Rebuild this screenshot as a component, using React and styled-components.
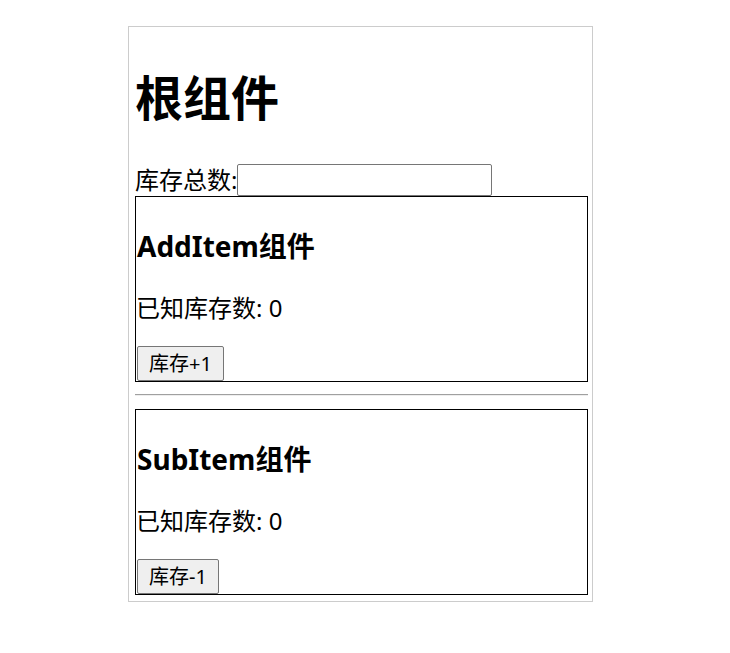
import React, { useState } from 'react';
import styled, { createGlobalStyle } from 'styled-components';

const GlobalStyle = createGlobalStyle`
  body {
    margin: 0;
    background: #fff;
    color: #000;
    font-family: "Noto Sans", "Noto Sans CJK SC", sans-serif;
  }
`;

const Root = styled.div`
  width: 465px;
  box-sizing: border-box;
  margin: 26px 0 0 128px;
  padding: 0 4px 6px 6px;
  border: 1px solid #ccc;
`;

const Title = styled.h1`
  margin: 43px 0 38px;
  font-size: 48px;
  line-height: 56px;
  font-weight: 700;
`;

const TotalRow = styled.div`
  display: flex;
  align-items: center;
  height: 32px;
  font-size: 24px;
  line-height: 32px;
`;

const TotalInput = styled.input`
  width: 255px;
  height: 32px;
  box-sizing: border-box;
  margin: 0;
  border: 1px solid #767676;
  border-radius: 2px;
  font-size: 20px;
`;

const Card = styled.div`
  border: 1px solid #000;
  display: flex;
  flex-direction: column;
  align-items: flex-start;
`;

const CardTitle = styled.h3`
  margin: 32px 0 0 1px;
  font-size: 28px;
  line-height: 34px;
  font-weight: 700;
`;

const Count = styled.p`
  margin: 30px 0 0;
  font-size: 24px;
  line-height: 30px;
`;

const Button = styled.button`
  margin: 23px 0 0 1px;
  height: 35px;
  padding: 0 11px;
  box-sizing: border-box;
  background: #efefef;
  border: 1px solid #767676;
  border-radius: 2px;
  color: #000;
  font-family: inherit;
  font-size: 20px;
  line-height: 33px;
`;

const Divider = styled.hr`
  margin: 12px 0 13px;
  height: 0;
  border: 0;
  border-top: 1px solid #a0a0a0;
  border-bottom: 1px solid #eee;
`;

function ItemCard({ name, count, label }) {
  return (
    <Card>
      <CardTitle>{name}组件</CardTitle>
      <Count>已知库存数: {count}</Count>
      <Button>{label}</Button>
    </Card>
  );
}

export default function App() {
  const [total, setTotal] = useState('');
  return (
    <>
      <GlobalStyle />
      <Root>
        <Title>根组件</Title>
        <TotalRow>
          库存总数:
          <TotalInput value={total} onChange={(e) => setTotal(e.target.value)} />
        </TotalRow>
        <ItemCard name="AddItem" count={0} label="库存+1" />
        <Divider />
        <ItemCard name="SubItem" count={0} label="库存-1" />
      </Root>
    </>
  );
}
